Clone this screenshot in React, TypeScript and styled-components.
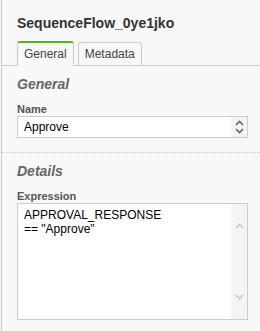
import React from 'react';
import styled, { createGlobalStyle } from 'styled-components';

const GlobalStyle = createGlobalStyle`
  html, body {
    margin: 0;
    padding: 0;
    background: #f8f8f8;
  }
  body {
    font-family: Arial, "Liberation Sans", sans-serif;
    font-size: 12px;
    color: #444;
  }
`;

const Panel = styled.div`
  width: 258px;
  height: 331px;
  margin-left: 1px;
  border-left: 1px solid #ccc;
  background: #f8f8f8;
  overflow: hidden;
`;

const Header = styled.div`
  padding: 15px 0 0 15px;
  font-size: 14px;
  font-weight: bold;
  color: #333;
  height: 26px;
  line-height: 16px;
`;

const TabBar = styled.div`
  display: flex;
  gap: 4px;
  padding-left: 15px;
  border-bottom: 1px solid #ccc;
  height: 24px;
`;

const Tab = styled.div<{ $active?: boolean }>`
  height: 22px;
  margin-top: ${(p) => (p.$active ? '0' : '1px')};
  padding: 0 6px;
  line-height: 22px;
  font-size: 12px;
  color: #444;
  border: 1px solid #ccc;
  border-top: ${(p) => (p.$active ? '2px solid #52b415' : '1px solid #ccc')};
  border-bottom: ${(p) => (p.$active ? '1px solid #f8f8f8' : 'none')};
  border-radius: 3px 3px 0 0;
  background: #f8f8f8;
  position: relative;
  z-index: ${(p) => (p.$active ? 1 : 0)};
`;

const Group = styled.div<{ $last?: boolean }>`
  padding: 10px 12px 14px 15px;
  border-bottom: ${(p) => (p.$last ? 'none' : '1px dotted #ccc')};
`;

const GroupTitle = styled.div`
  font-size: 14px;
  font-weight: bold;
  font-style: italic;
  color: #666;
  line-height: 16px;
  margin-bottom: 11px;
`;

const Label = styled.label`
  display: block;
  font-size: 11px;
  font-weight: bold;
  color: #555;
  line-height: 13px;
`;

const InputBox = styled.div`
  display: flex;
  height: 20px;
  border: 1px solid #ccc;
  background: #fff;
`;

const Input = styled.div`
  flex: 1;
  padding: 0 6px;
  line-height: 20px;
  font-size: 12px;
  color: #000;
`;

const Spinner = styled.div`
  width: 16px;
  background: #f4f4f4;
  display: flex;
  flex-direction: column;
  align-items: center;
  justify-content: center;
  gap: 2px;
`;

const TextArea = styled.div`
  display: flex;
  height: 115px;
  border: 1px solid #ccc;
  background: #fff;
`;

const TextBody = styled.div`
  flex: 1;
  padding: 4px 6px;
  font-size: 12px;
  line-height: 14px;
  color: #000;
`;

const ScrollTrack = styled.div`
  width: 16px;
  background-color: #f4f4f4;
  background-image: radial-gradient(#e8e8e8 0.6px, transparent 0.7px);
  background-size: 2px 2px;
  display: flex;
  flex-direction: column;
  justify-content: space-between;
  align-items: center;
  padding: 19px 0 19px;
`;

const Chevron = ({ up, color }: { up?: boolean; color: string }) => (
  <svg width="9" height="6" viewBox="0 0 9 6">
    <path
      d={up ? 'M1 5 L4.5 1.5 L8 5' : 'M1 1 L4.5 4.5 L8 1'}
      fill="none"
      stroke={color}
      strokeWidth="1.6"
    />
  </svg>
);

export default function App() {
  return (
    <>
      <GlobalStyle />
      <Panel>
        <Header>SequenceFlow_0ye1jko</Header>
        <TabBar>
          <Tab $active>General</Tab>
          <Tab>Metadata</Tab>
        </TabBar>
        <Group>
          <GroupTitle>General</GroupTitle>
          <Label>Name</Label>
          <InputBox>
            <Input>Approve</Input>
            <Spinner>
              <Chevron up color="#666" />
              <Chevron color="#666" />
            </Spinner>
          </InputBox>
        </Group>
        <Group $last>
          <GroupTitle>Details</GroupTitle>
          <Label>Expression</Label>
          <TextArea>
            <TextBody>
              APPROVAL_RESPONSE
              <br />
              == "Approve"
            </TextBody>
            <ScrollTrack>
              <Chevron up color="#c8c8c8" />
              <Chevron color="#c8c8c8" />
            </ScrollTrack>
          </TextArea>
        </Group>
      </Panel>
    </>
  );
}
